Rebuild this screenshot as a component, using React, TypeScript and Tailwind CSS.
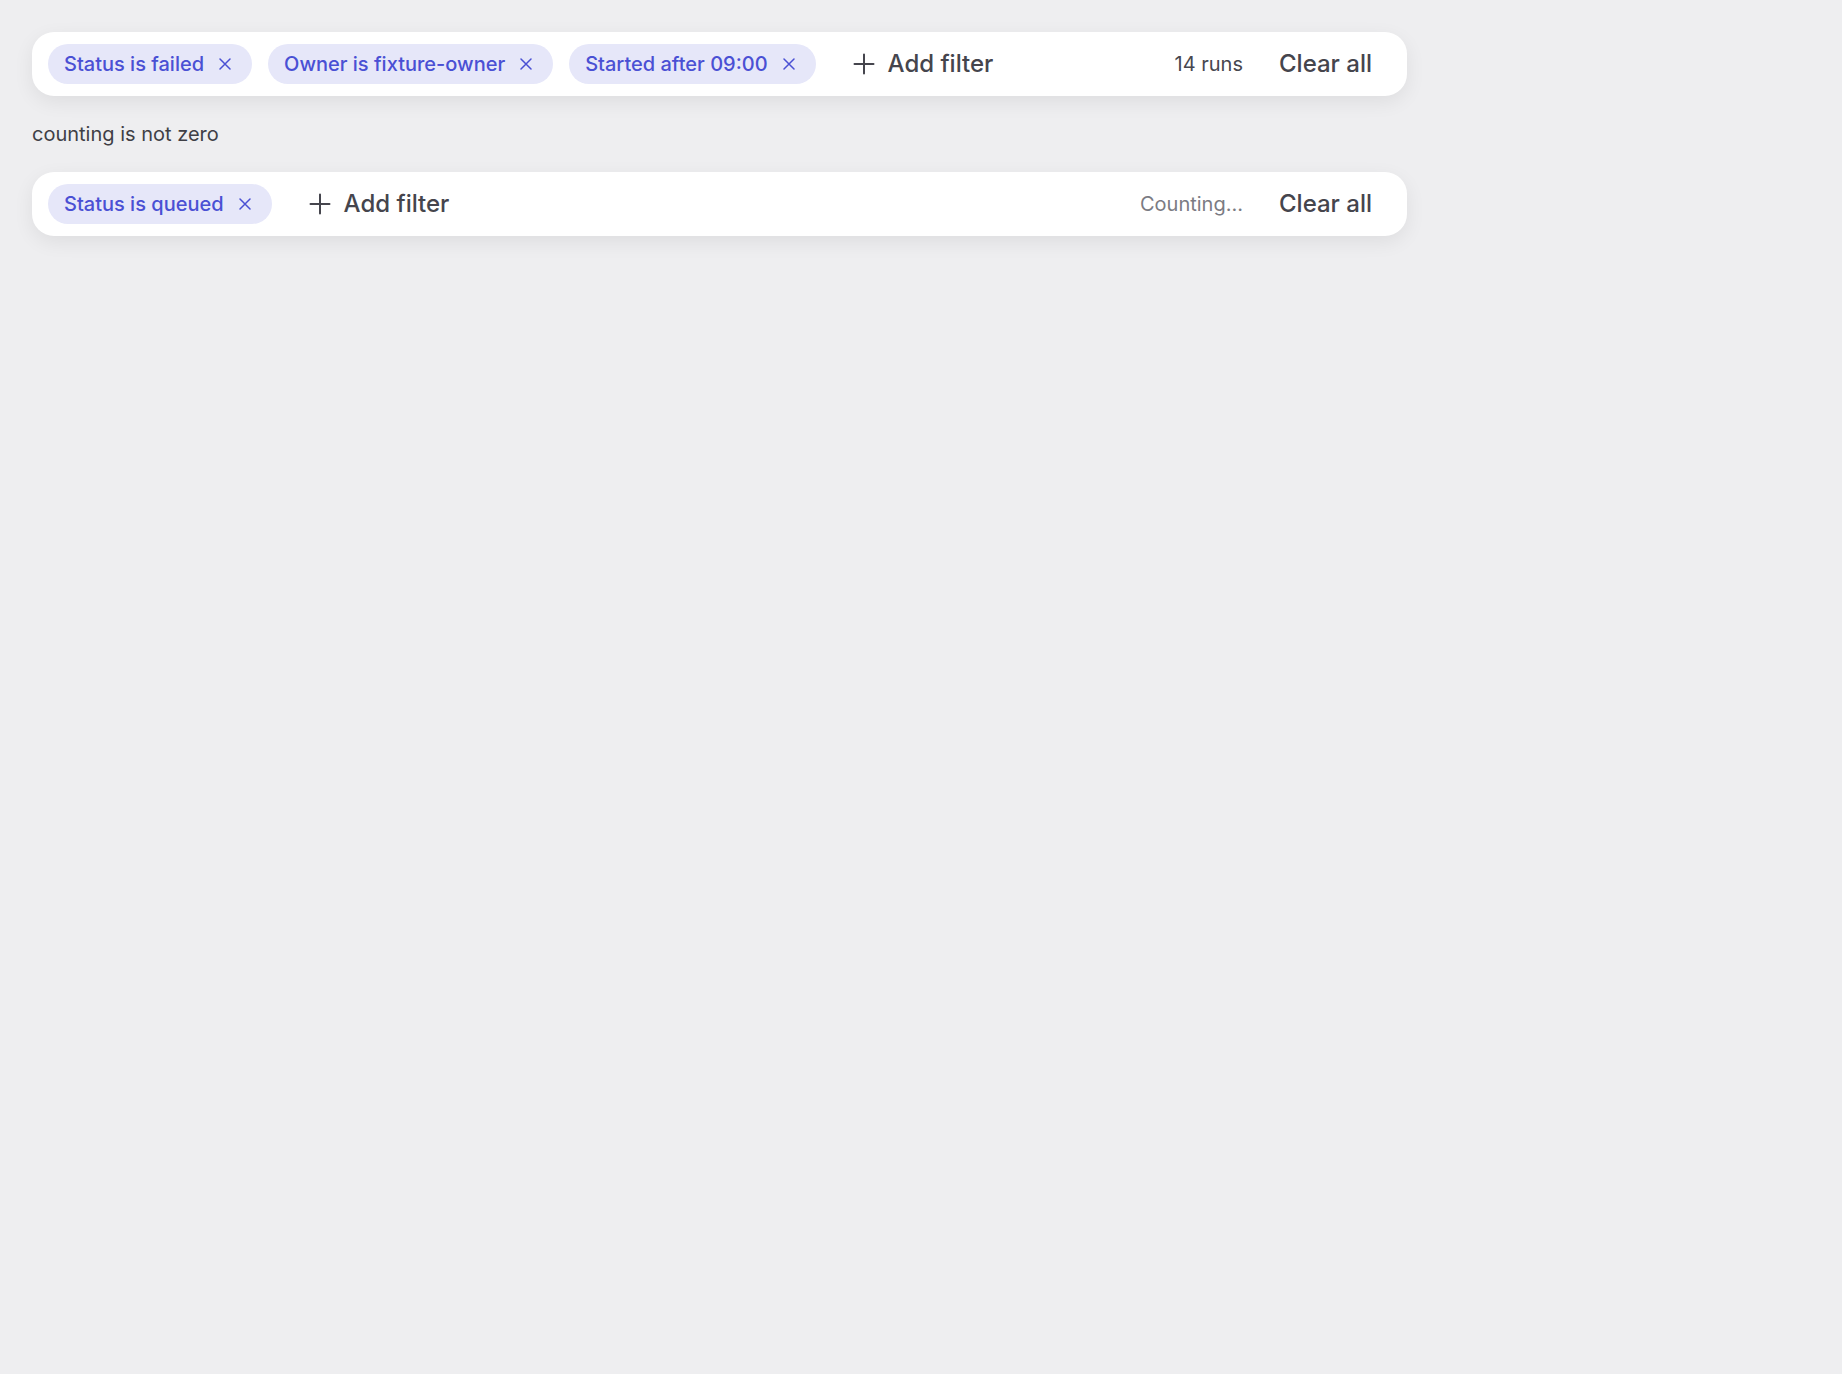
type Chip = { label: string };

function CloseIcon() {
  return (
    <svg width="12" height="12" viewBox="0 0 12 12" fill="none" className="shrink-0">
      <path d="M1 1L11 11M11 1L1 11" stroke="currentColor" strokeWidth="1.5" strokeLinecap="round" />
    </svg>
  );
}

function PlusIcon() {
  return (
    <svg width="24" height="24" viewBox="0 0 24 24" fill="none" className="shrink-0">
      <path d="M2.5 12H21.5M12 2.5V21.5" stroke="currentColor" strokeWidth="2" strokeLinecap="round" />
    </svg>
  );
}

function FilterBar({ chips, count, pending }: { chips: Chip[]; count: string; pending?: boolean }) {
  return (
    <div className="flex w-full max-w-[1375px] items-center gap-4 rounded-[22px] bg-white py-3 pl-4 pr-4 shadow-[0_6px_20px_rgba(0,0,0,0.07)]">
      {chips.map((chip) => (
        <span
          key={chip.label}
          className="flex h-10 items-center rounded-full bg-[#e6e7f9] pl-4 pr-[21px] text-[20px] font-medium text-[#4a50d4]"
        >
          {chip.label}
          <span className="ml-[15px] flex items-center">
            <CloseIcon />
          </span>
        </span>
      ))}
      <button className="flex h-10 items-center gap-3 px-5 text-[24px] font-medium text-[#45454d]">
        <PlusIcon />
        Add filter
      </button>
      <span className={`ml-auto text-[20px] ${pending ? "text-[#7b7b83]" : "text-[#47474f]"}`}>{count}</span>
      <button className="flex h-10 items-center pl-5 pr-[19px] text-[24px] font-medium text-[#45454d]">Clear all</button>
    </div>
  );
}

export default function App() {
  return (
    <main
      className="min-h-screen bg-[#eeeef0] p-8 text-[#3f3f46]"
      style={{ fontFamily: "Inter, 'Noto Sans', sans-serif" }}
    >
      <div className="flex flex-col gap-6">
        <FilterBar
          chips={[{ label: "Status is failed" }, { label: "Owner is fixture-owner" }, { label: "Started after 09:00" }]}
          count="14 runs"
        />
        <p className="text-[20px] leading-7 text-[#3f3f46]">counting is not zero</p>
        <FilterBar chips={[{ label: "Status is queued" }]} count="Counting…" pending />
      </div>
    </main>
  );
}
